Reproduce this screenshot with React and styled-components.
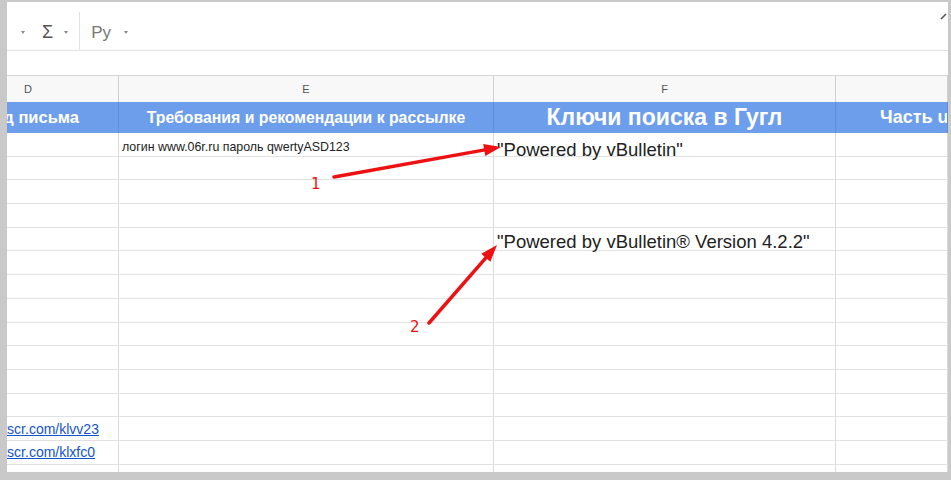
import React from 'react';
import styled, { createGlobalStyle } from 'styled-components';

const GlobalStyle = createGlobalStyle`
  html, body { margin: 0; padding: 0; background: #c9c9c9; }
  body { font-family: "Liberation Sans", Arial, sans-serif; }
`;

const COLS = '112px 375px 342px 1fr';
const ROW_H = 23.7;

const Page = styled.div`
  position: relative;
  width: 951px;
  height: 480px;
  overflow: hidden;
`;

const Frame = styled.div`
  position: relative;
  margin: 2px 3px 0 7px;
  height: 470px;
  background: #ffffff;
  overflow: hidden;
`;

const Toolbar = styled.div`
  height: 49px;
  box-sizing: border-box;
  display: flex;
  align-items: center;
  padding: 12px 0 0 14px;
  border-bottom: 1px solid #e2e2e2;
`;

const Caret = styled.span`
  width: 0;
  height: 0;
  margin-left: ${p => p.$ml || 0}px;
  border-left: 2.5px solid transparent;
  border-right: 2.5px solid transparent;
  border-top: 3px solid #8a8a8a;
`;

const ToolGlyph = styled.span`
  margin-left: ${p => p.$ml || 0}px;
  font-size: ${p => p.$size || 17}px;
  color: ${p => p.$color || '#555'};
  line-height: 1;
`;

const ToolSep = styled.span`
  align-self: flex-end;
  margin-left: ${p => p.$ml || 0}px;
  width: 1px;
  height: 38px;
  background: #e2e2e2;
`;

const CollapseIcon = styled.svg`
  position: absolute;
  right: 0;
  top: 10px;
`;

const FormulaBar = styled.div`
  height: 24px;
  border-bottom: 1px solid #d4d4d4;
`;

const HeaderRow = styled.div`
  display: grid;
  grid-template-columns: ${COLS};
  height: 26px;
  background: #f8f8f8;
`;

const ColLetter = styled.div`
  display: flex;
  align-items: center;
  justify-content: ${p => (p.$start ? 'flex-start' : 'center')};
  padding-left: ${p => (p.$start ? '17px' : '0')};
  border-right: 1px solid #d0d0d0;
  font-size: 11px;
  color: #555;
`;

const BlueRow = styled.div`
  display: grid;
  grid-template-columns: ${COLS};
  height: 31px;
  background: #6d9eeb;
`;

const BlueCell = styled.div`
  display: flex;
  align-items: center;
  justify-content: ${p => p.$justify || 'center'};
  padding: 0 ${p => p.$pr || 0}px 0 ${p => p.$pl || 0}px;
  overflow: hidden;
  white-space: nowrap;
  border-right: 1px solid #5f8fdc;
  color: #ffffff;
  font-weight: bold;
  font-size: ${p => p.$size || 15}px;
`;

const Row = styled.div`
  display: grid;
  grid-template-columns: ${COLS};
  height: ${ROW_H}px;
  box-sizing: border-box;
  border-bottom: 1px solid #e2e2e2;
`;

const Cell = styled.div`
  display: flex;
  align-items: center;
  padding: ${p => p.$pt || 0}px 0 0 3px;
  overflow: ${p => (p.$clip ? 'hidden' : 'visible')};
  white-space: nowrap;
  border-right: 1px solid #dadada;
  color: #222;
  font-size: ${p => p.$size || 13}px;
  position: relative;
  z-index: ${p => (p.$over ? 1 : 0)};
`;

const Link = styled.a`
  margin-left: ${p => p.$ml || 0}px;
  color: #1155cc;
  text-decoration: underline;
  font-size: 14px;
`;

const Overlay = styled.svg`
  position: absolute;
  left: 0;
  top: 0;
  pointer-events: none;
`;

const Label = styled.span`
  position: absolute;
  left: ${p => p.$x}px;
  top: ${p => p.$y}px;
  font-family: "DejaVu Sans", sans-serif;
  font-size: 15px;
  line-height: 15px;
  color: #ee1111;
`;

function Arrow({ tail, tip, len = 17, w = 12 }) {
  const dx = tip[0] - tail[0];
  const dy = tip[1] - tail[1];
  const L = Math.hypot(dx, dy);
  const ux = dx / L;
  const uy = dy / L;
  const bx = tip[0] - ux * len;
  const by = tip[1] - uy * len;
  const px = -uy * (w / 2);
  const py = ux * (w / 2);
  const pts = `${tip[0]},${tip[1]} ${bx + px},${by + py} ${bx - px},${by - py}`;
  return (
    <g>
      <line
        x1={tail[0]}
        y1={tail[1]}
        x2={bx + ux * 2}
        y2={by + uy * 2}
        stroke="#ee1111"
        strokeWidth="3.5"
        strokeLinecap="round"
      />
      <polygon points={pts} fill="#ee1111" />
    </g>
  );
}

const rows = Array.from({ length: 15 }, (_, i) => i + 1);

export default function App() {
  return (
    <>
      <GlobalStyle />
      <Page>
        <Frame>
          <Toolbar>
            <Caret />
            <ToolGlyph $ml={17} $size={18} $color="#555">Σ</ToolGlyph>
            <Caret $ml={11} />
            <ToolSep $ml={11} />
            <ToolGlyph $ml={11} $size={17} $color="#777">Ру</ToolGlyph>
            <Caret $ml={13} />
          </Toolbar>
          <CollapseIcon width="8" height="8" viewBox="0 0 8 8">
            <path d="M1 7 L6 2" stroke="#555" strokeWidth="1.6" fill="none" />
          </CollapseIcon>
          <FormulaBar />
          <HeaderRow>
            <ColLetter $start>D</ColLetter>
            <ColLetter>E</ColLetter>
            <ColLetter>F</ColLetter>
            <ColLetter />
          </HeaderRow>
          <BlueRow>
            <BlueCell $justify="flex-end" $pr={39} $size={16.5}>Код письма</BlueCell>
            <BlueCell $size={15.8}>Требования и рекомендации к рассылке</BlueCell>
            <BlueCell $size={23}>Ключи поиска в Гугл</BlueCell>
            <BlueCell $justify="flex-start" $pl={44} $size={18}>Часть url</BlueCell>
          </BlueRow>
          {rows.map(r => (
            <Row key={r}>
              <Cell $clip>
                {r === 13 && <Link $ml={-27}>prntscr.com/klvv23</Link>}
                {r === 14 && <Link $ml={-27}>prntscr.com/klxfc0</Link>}
              </Cell>
              <Cell $size={12.4}>{r === 1 && 'логин www.06r.ru пароль qwertyASD123'}</Cell>
              <Cell $size={18.5} $over $pt={r === 1 ? 6 : 3}>
                {r === 1 && '"Powered by vBulletin"'}
                {r === 5 && '"Powered by vBulletin® Version 4.2.2"'}
              </Cell>
              <Cell />
            </Row>
          ))}
        </Frame>
        <Overlay width="951" height="480" viewBox="0 0 951 480">
          <Arrow tail={[334, 177]} tip={[501, 147]} />
          <Arrow tail={[429, 323]} tip={[497, 245]} />
        </Overlay>
        <Label $x={311} $y={177}>1</Label>
        <Label $x={410} $y={320}>2</Label>
      </Page>
    </>
  );
}
